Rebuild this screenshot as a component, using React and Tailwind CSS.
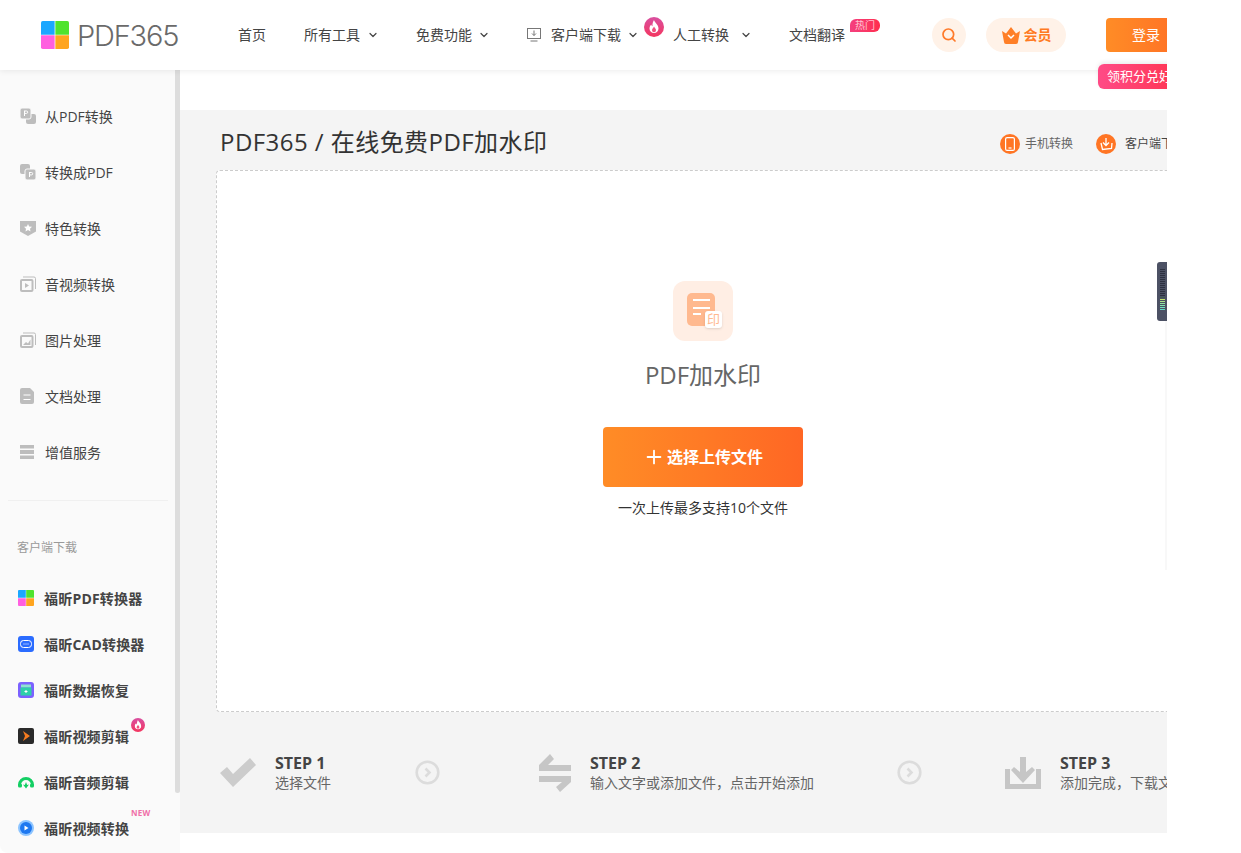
import { ChevronDown, Search, Plus } from 'lucide-react';

const FONT = { fontFamily: '"Open Sans", "Noto Sans CJK SC", sans-serif' };

const Flame = ({ size = 20 }) => (
  <svg width={size} height={size} viewBox="0 0 20 20">
    <defs>
      <linearGradient id="flameBg" x1="0" y1="0" x2="0" y2="1">
        <stop offset="0" stopColor="#d94fa0" />
        <stop offset="1" stopColor="#f4365f" />
      </linearGradient>
    </defs>
    <circle cx="10" cy="10" r="10" fill="url(#flameBg)" />
    <path d="M10 3c.5 2.500 4.500 4.500 4.500 8.500a4.500 4.500 0 0 1-9 0c0-2 1-3.200 1.800-4 .2 1 .6 1.500 1.200 1.800C8.300 7 8.800 5 10 3z" fill="#fff" />
    <path d="M10 9.500c.3 1.200 2 2 2 3.700a2 2 0 0 1-4 0c0-1.500 1.500-2.200 2-3.700z" fill="#f0507f" />
  </svg>
);

const PageIcon = ({ flip }) => (
  <svg width="16" height="16" viewBox="0 0 16 16">
    {flip ? (
      <>
        <rect x="0" y="0" width="10" height="10" rx="2" fill="#bdbdbd" />
        <rect x="5" y="5" width="11" height="11" rx="2" fill="#bdbdbd" stroke="#fafafa" />
        <path d="M9 8.500h2.500a1.200 1.200 0 0 1 0 2.400H10M9.500 8.500v4.500" fill="none" stroke="#fff" strokeWidth="1" />
      </>
    ) : (
      <>
        <rect x="6" y="6" width="10" height="10" rx="2" fill="#bdbdbd" />
        <rect x="0" y="0" width="11" height="11" rx="2" fill="#bdbdbd" stroke="#fafafa" />
        <path d="M4 3h2.500a1.200 1.200 0 0 1 0 2.400H4.500M4.500 3v5" fill="none" stroke="#fff" strokeWidth="1" />
      </>
    )}
  </svg>
);

const ShieldIcon = () => (
  <svg width="16" height="16" viewBox="0 0 16 16">
    <path d="M0 1h16v10.500L8 16l-8-4.500z" fill="#bdbdbd" />
    <path d="M8 4l1.200 2.500 2.800.3-2 1.900.5 2.700L8 10.100l-2.500 1.300.5-2.700-2-1.900 2.800-.3z" fill="#fff" />
  </svg>
);

const MediaIcon = () => (
  <svg width="16" height="16" viewBox="0 0 16 16">
    <path d="M3 1h11a1.500 1.500 0 0 1 1.500 1.500V13" fill="none" stroke="#bdbdbd" />
    <rect x="1" y="4" width="11.500" height="11" rx="1" fill="none" stroke="#bdbdbd" strokeWidth="2" />
    <path d="M5 7l4 2.500L5 12z" fill="#bdbdbd" />
  </svg>
);

const ImageIcon = () => (
  <svg width="16" height="16" viewBox="0 0 16 16">
    <path d="M3 1h11a1.500 1.500 0 0 1 1.500 1.500V13" fill="none" stroke="#bdbdbd" />
    <rect x="1" y="4" width="11.500" height="11" rx="1" fill="none" stroke="#bdbdbd" strokeWidth="2" />
    <path d="M3 13l3-3 2 1.500 2.500-4V13z" fill="#bdbdbd" />
  </svg>
);

const DocIcon = () => (
  <svg width="14" height="16" viewBox="0 0 14 16">
    <path d="M2 0h8l4 4v10a2 2 0 0 1-2 2H2a2 2 0 0 1-2-2V2a2 2 0 0 1 2-2z" fill="#bdbdbd" />
    <path d="M3.500 7h7M3.500 11.500h7" stroke="#fff" strokeWidth="1.200" />
  </svg>
);

const ServerIcon = () => (
  <svg width="14" height="14" viewBox="0 0 14 14">
    <rect width="14" height="3.500" fill="#bdbdbd" />
    <rect y="5" width="14" height="4" fill="#bdbdbd" />
    <rect y="10.500" width="14" height="3.500" fill="#bdbdbd" />
  </svg>
);

const FourSquares = ({ size = 16 }) => (
  <svg width={size} height={size} viewBox="0 0 16 16">
    <path d="M1 0h6.800v7.800H0V1a1 1 0 0 1 1-1z" fill="#1aa7ff" />
    <path d="M8.200 0H15a1 1 0 0 1 1 1v6.800H8.200z" fill="#4fe32e" />
    <path d="M0 8.200h7.800V16H1a1 1 0 0 1-1-1z" fill="#ff5fe0" />
    <path d="M8.200 8.200H16V15a1 1 0 0 1-1 1H8.200z" fill="#ffa51f" />
  </svg>
);

const CadIcon = () => (
  <svg width="16" height="16" viewBox="0 0 16 16">
    <rect width="16" height="16" rx="3" fill="#2b6cff" />
    <rect x="2.500" y="4.500" width="11" height="7" rx="3" fill="none" stroke="#fff" />
    <path d="M5.500 8h5" stroke="#fff" strokeDasharray="1 1" />
  </svg>
);

const RecoverIcon = () => (
  <svg width="16" height="16" viewBox="0 0 16 16">
    <rect width="16" height="16" rx="3" fill="#7b61ff" />
    <rect x="3" y="2.500" width="10" height="3" fill="#8fe3d0" />
    <rect x="2.500" y="5.500" width="11" height="8" fill="#2ecfa8" />
    <path d="M8 8v3M6.500 9.500h3" stroke="#fff" />
  </svg>
);

const VideoEditIcon = () => (
  <svg width="16" height="16" viewBox="0 0 16 16">
    <rect width="16" height="16" rx="2" fill="#2a2a2a" />
    <path d="M5 3l7 5-7 5 2-5z" fill="#f47b20" />
  </svg>
);

const AudioIcon = () => (
  <svg width="16" height="16" viewBox="0 0 16 16">
    <path d="M1.500 11a6.500 6.500 0 0 1 13 0" fill="none" stroke="#14cf64" strokeWidth="3" />
    <rect x="0" y="9.500" width="4" height="4" rx="1.500" fill="#14cf64" />
    <rect x="12" y="9.500" width="4" height="4" rx="1.500" fill="#14cf64" />
    <path d="M8 14.500L5 10.500l1.800.6L8 8l1.200 3.100 1.800-.6z" fill="#14cf64" />
  </svg>
);

const VideoConvertIcon = () => (
  <svg width="16" height="16" viewBox="0 0 16 16">
    <circle cx="8" cy="8" r="8" fill="#8cc4ff" />
    <circle cx="8" cy="8" r="6" fill="#1e78f0" />
    <path d="M6.500 5.500l4 2.500-4 2.500z" fill="#fff" />
  </svg>
);

const ArrowCircle = () => (
  <svg width="25" height="25" viewBox="0 0 25 25" className="shrink-0">
    <circle cx="12.500" cy="12.500" r="10.800" fill="none" stroke="#dcdcdc" strokeWidth="2.600" />
    <path d="M10.500 8.500l4 4-4 4" fill="none" stroke="#dcdcdc" strokeWidth="2.600" />
  </svg>
);

const toolItems = [
  { name: '从PDF转换', icon: <PageIcon /> },
  { name: '转换成PDF', icon: <PageIcon flip /> },
  { name: '特色转换', icon: <ShieldIcon /> },
  { name: '音视频转换', icon: <MediaIcon /> },
  { name: '图片处理', icon: <ImageIcon /> },
  { name: '文档处理', icon: <DocIcon /> },
  { name: '增值服务', icon: <ServerIcon /> },
];

const clientItems = [
  { name: '福昕PDF转换器', icon: <FourSquares /> },
  { name: '福昕CAD转换器', icon: <CadIcon /> },
  { name: '福昕数据恢复', icon: <RecoverIcon /> },
  { name: '福昕视频剪辑', icon: <VideoEditIcon />, hot: true },
  { name: '福昕音频剪辑', icon: <AudioIcon /> },
  { name: '福昕视频转换', icon: <VideoConvertIcon />, isNew: true },
];

const Header = () => (
  <header className="relative z-10 flex h-[70px] shrink-0 items-center bg-white text-sm text-[#444] shadow-[0_1px_6px_rgba(0,0,0,0.08)]">
    <div className="ml-[41px] flex w-[197px] shrink-0 items-center gap-[8px]">
      <FourSquares size={28} />
      <span className="text-[29px] font-light leading-none tracking-[-1.2px] text-[#6a6a6a]" style={{ fontFamily: '"Inter", sans-serif' }}>
        PDF365
      </span>
    </div>
    <span className="w-[66px] shrink-0">首页</span>
    <span className="flex w-[112px] shrink-0 items-center">
      所有工具
      <ChevronDown size={12} strokeWidth={2.4} className="ml-[7px]" />
    </span>
    <span className="flex w-[111px] shrink-0 items-center">
      免费功能
      <ChevronDown size={12} strokeWidth={2.4} className="ml-[6px]" />
    </span>
    <span className="relative flex w-[146px] shrink-0 items-center">
      <svg width="14" height="14" viewBox="0 0 14 14" className="mr-[10px]" fill="none" stroke="#777">
        <rect x="0.500" y="0.500" width="13" height="10" />
        <path d="M7 2.500v5M5 5.500l2 2 2-2M3.500 13h7" />
      </svg>
      客户端下载
      <ChevronDown size={12} strokeWidth={2.4} className="ml-[6px]" />
      <span className="absolute left-[117px] top-[-8px]">
        <Flame />
      </span>
    </span>
    <span className="flex w-[116px] shrink-0 items-center">
      人工转换
      <ChevronDown size={12} strokeWidth={2.4} className="ml-[11px]" />
    </span>
    <span className="relative w-[143px] shrink-0">
      文档翻译
      <span className="absolute left-[61px] top-[-6px] h-[13px] w-[30px] rounded-t-[6px] rounded-br-[6px] bg-gradient-to-r from-[#f43f7f] to-[#ff2d4d] text-center text-[10px] leading-[13px] text-[#ffc2d0]">
        热门
      </span>
    </span>
    <span className="flex h-[34px] w-[34px] shrink-0 items-center justify-center rounded-full bg-[#fff2e8]">
      <Search size={16} strokeWidth={2.6} className="text-[#ff7a2a]" />
    </span>
    <span className="ml-[20px] flex h-[34px] w-[80px] shrink-0 items-center justify-center gap-[3px] rounded-full bg-[#fff2e8] font-bold text-[#ff7a22]">
      <svg width="20" height="18" viewBox="0 0 20 18">
        <path d="M1 5l4 2.500L10 1l5 6.500L19 5l-2 11a2 2 0 0 1-2 2H5a2 2 0 0 1-2-2z" fill="#ff7f27" />
        <path d="M7 9l3 3 3-3" fill="none" stroke="#fff" strokeWidth="1.500" />
      </svg>
      会员
    </span>
    <span className="ml-[40px] flex h-[34px] w-[90px] shrink-0 items-center rounded-[4px] bg-gradient-to-r from-[#ff8c26] to-[#ff6a25] pl-[26px] text-white">
      登录
    </span>
  </header>
);

const Sidebar = () => (
  <aside className="relative h-[783px] w-[180px] shrink-0 overflow-hidden rounded-bl-lg bg-[#fafafa]">
    <ul className="pt-[18px] text-[14px] text-[#444]">
      {toolItems.map((item) => (
        <li key={item.name} className="flex h-[56px] items-center pl-[20px]">
          <span className="flex w-[25px] shrink-0">{item.icon}</span>
          {item.name}
        </li>
      ))}
    </ul>
    <div className="ml-[8px] mr-[12px] mt-[20px] border-t border-[#f0f0f0]" />
    <p className="mt-[38px] pl-[17px] text-[12px] leading-[18px] text-[#999]">客户端下载</p>
    <ul className="mt-[18px] text-[14px] font-bold tracking-[0.2px] text-[#444]">
      {clientItems.map((item) => (
        <li key={item.name} className="relative flex h-[46px] items-center pl-[18px]">
          <span className="flex w-[26px] shrink-0">{item.icon}</span>
          {item.name}
          {item.hot && (
            <span className="absolute left-[131px] top-[5px] flex">
              <Flame size={14} />
            </span>
          )}
          {item.isNew && (
            <span className="absolute left-[131px] top-[2px] text-[8px] font-bold leading-[12px] text-[#f06fa8]">NEW</span>
          )}
        </li>
      ))}
    </ul>
    <div className="absolute right-0 top-0 h-[723px] w-[5px] rounded-b-[3px] bg-[#dddddd]" />
  </aside>
);

const Steps = () => (
  <div className="flex h-[121px] items-center pl-[40px]">
    <svg width="36" height="29" viewBox="0 0 36 29" className="mr-[19px] shrink-0" fill="#cccccc">
      <path d="M0 15l7-6 6 7L30 0l6 7-23 22z" />
    </svg>
    <div className="w-[140px] shrink-0">
      <p className="text-base font-bold leading-[20px] text-[#444]">STEP 1</p>
      <p className="text-[14px] leading-[20px] text-[#666]">选择文件</p>
    </div>
    <ArrowCircle />
    <svg width="32" height="38" viewBox="0 0 32 38" className="ml-[99px] mr-[19px] shrink-0" fill="#c6c6c6">
      <path d="M0 11L11 0l4 5-6 6h23v6H0z" />
      <path d="M32 28L21 38l-4-5 6-5H0v-6h32z" />
    </svg>
    <div className="w-[307px] shrink-0">
      <p className="text-base font-bold leading-[20px] text-[#444]">STEP 2</p>
      <p className="text-[14px] leading-[20px] text-[#666]">输入文字或添加文件，点击开始添加</p>
    </div>
    <ArrowCircle />
    <svg width="36" height="32" viewBox="0 0 36 32" className="ml-[83px] mr-[19px] shrink-0" fill="#c6c6c6">
      <path d="M0 12h5v15h26V12h5v20H0z" />
      <path d="M15 0h6v15l6-5 3 3-12 13L6 13l3-3 6 5z" />
    </svg>
    <div className="w-[200px] shrink-0">
      <p className="text-base font-bold leading-[20px] text-[#444]">STEP 3</p>
      <p className="whitespace-nowrap text-[14px] leading-[20px] text-[#666]">添加完成，下载文件</p>
    </div>
  </div>
);

const Main = () => (
  <main className="min-w-0 flex-1 pt-[40px]">
    <section className="h-[723px] bg-[#f4f4f4]">
      <div className="flex h-[60px] items-center justify-between pl-[40px] pt-[4px]">
        <h1 className="text-[24px] leading-none tracking-[0.45px] text-[#333]">PDF365 / 在线免费PDF加水印</h1>
        <div className="mr-[-40px] mt-[4px] flex w-[207px] shrink-0 items-center text-[12px] text-[#666]">
          <span className="flex h-[20px] w-[20px] items-center justify-center rounded-full bg-[#ff7524]">
            <svg width="10" height="14" viewBox="0 0 10 14" fill="none" stroke="#fff" strokeWidth="1.200">
              <rect x="0.600" y="0.600" width="8.800" height="12.800" rx="1.500" />
              <path d="M3.500 11h3" />
            </svg>
          </span>
          <span className="ml-[5px]">手机转换</span>
          <span className="ml-[23px] flex h-[20px] w-[20px] items-center justify-center rounded-full bg-[#ff7524]">
            <svg width="14" height="14" viewBox="0 0 14 14" fill="none" stroke="#fff" strokeWidth="1.300">
              <path d="M7 1v7M4 5.500L7 8.500l3-3M2 6l1.500 6.500 9-1L13 6" />
            </svg>
          </span>
          <span className="ml-[9px] whitespace-nowrap text-[#444]">客户端下载</span>
        </div>
      </div>
      <div className="ml-[36px] flex h-[542px] w-[974px] flex-col items-center rounded-[4px] border border-dashed border-[#cccccc] bg-white pt-[110px]">
        <div className="flex h-[60px] w-[60px] items-center justify-center rounded-[12px] bg-[#ffeee4]">
          <div className="relative h-[33px] w-[28px] -translate-x-[2px] -translate-y-[2px] rounded-[5px] bg-[#ffb98f]">
            <div className="absolute left-[6px] top-[6px] h-[2px] w-[17px] bg-white" />
            <div className="absolute left-[6px] top-[14px] h-[2px] w-[17px] bg-white" />
            <div className="absolute left-[6px] top-[20px] h-[2px] w-[8px] bg-white" />
            <div className="absolute left-[18px] top-[18px] flex h-[17px] w-[17px] items-center justify-center rounded-[3px] bg-white text-[13px] leading-none text-[#ffb98f] shadow-sm">
              印
            </div>
          </div>
        </div>
        <h2 className="mt-[16px] text-[24px] leading-[36px] text-[#666]">PDF加水印</h2>
        <button className="mt-[34px] flex h-[60px] w-[200px] items-center justify-center gap-[2px] rounded-[4px] bg-gradient-to-r from-[#ff8c26] to-[#ff6624] text-base font-bold text-white">
          <Plus size={22} strokeWidth={2} />
          选择上传文件
        </button>
        <p className="mt-[11px] text-[14px] leading-[20px] text-[#333]">一次上传最多支持10个文件</p>
      </div>
      <Steps />
    </section>
  </main>
);

const PluginHandle = () => {
  const bars = ['#2d3140', '#2d3140', '#2d3140', '#2d3140', '#2d3140', '#2d3140', '#2d3140', '#2d3140', '#2d3140', '#2d3140', '#2d3140', '#2d3140', '#2d3140', '#2d3140', '#3f5a50', '#c5e36b', '#a9e38a', '#8fe3a0', '#7fe3b0', '#6fe3c0', '#5fdcc8'];
  return (
    <>
      <div className="absolute left-[1157px] top-[262px] flex h-[59px] w-[10px] flex-col gap-[1px] rounded-l-[3px] bg-[#4c5164] pl-[3px] pt-[7px]">
        {bars.map((color, i) => (
          <div key={i} className="h-[1px] w-[5px] shrink-0" style={{ background: color }} />
        ))}
      </div>
      <div className="absolute left-[1165px] top-[321px] h-[249px] w-[2px] bg-[#f8f8f8]" />
    </>
  );
};

export default function App() {
  return (
    <div className="relative flex h-[853px] w-[1167px] flex-col overflow-hidden bg-white" style={FONT}>
      <Header />
      <div className="flex">
        <Sidebar />
        <Main />
      </div>
      <div className="absolute left-[1098px] top-[64px] z-20 flex h-[25px] w-[90px] items-center rounded-[6px] bg-gradient-to-r from-[#ff4a86] to-[#ff3048] pl-[9px] text-[13px] whitespace-nowrap text-white shadow-[0_-2px_4px_rgba(0,0,0,0.08)]">
        领积分兑好礼
      </div>
      <PluginHandle />
    </div>
  );
}
